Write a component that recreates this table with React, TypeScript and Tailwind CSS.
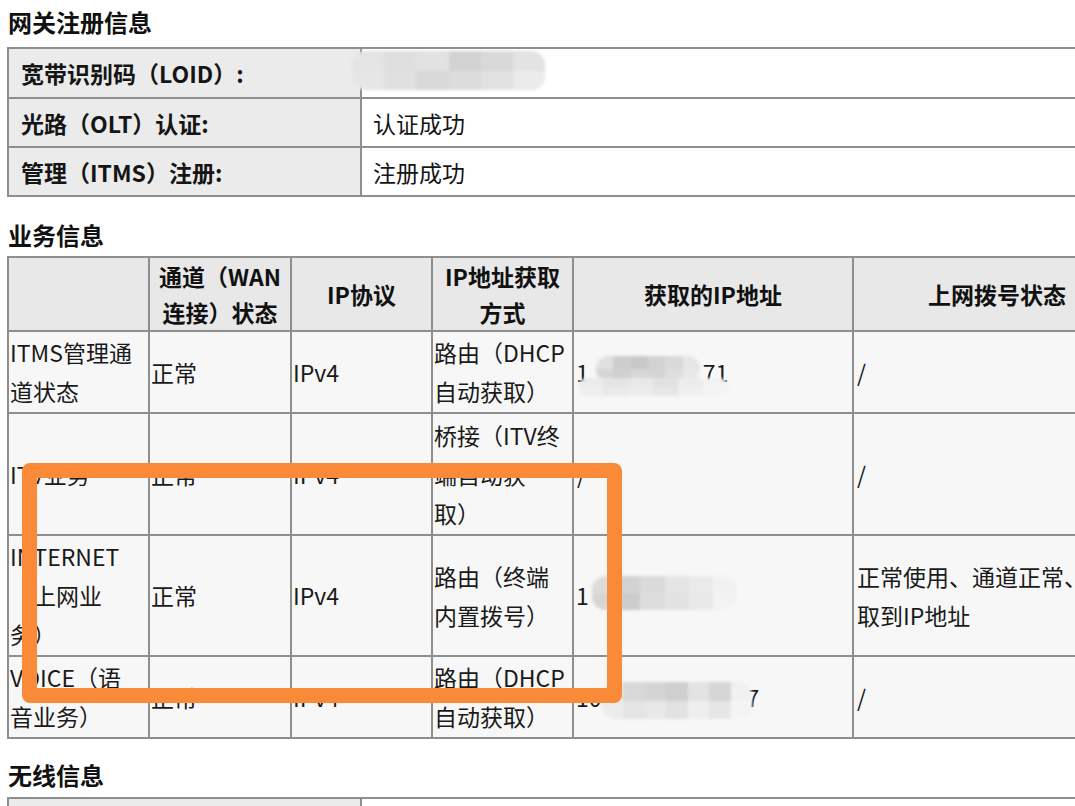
import React from 'react';

const FONT = "font-['Noto_Sans_CJK_SC','Noto_Sans',sans-serif]";

const TD_BORDER = 'border-2 border-[#8e8e8e]';

// pixelated mosaic used where the photo hides private values
const Blur = ({ className, top, bottom }: { className: string; top: string[]; bottom: string[] }) => (
  <div className={`absolute pointer-events-none rounded-[14px] overflow-hidden bg-[#e9e9e9] blur-[1.5px] flex flex-col ${className}`}>
    <div className="flex flex-1">
      {top.map((c, i) => (
        <div key={i} className={`flex-1 ${c}`} />
      ))}
    </div>
    <div className="flex flex-1">
      {bottom.map((c, i) => (
        <div key={i} className={`flex-1 ${c}`} />
      ))}
    </div>
  </div>
);

const SectionTitle = ({ text, className }: { text: string; className: string }) => (
  <div className={`text-[24px] leading-[30px] font-bold text-[#111] ${className}`}>{text}</div>
);

const InfoRow = ({ label, value, h }: { label: string; value?: React.ReactNode; h: string }) => (
  <tr className={h}>
    <td className={`${TD_BORDER} bg-[#ebebeb] px-[12px] font-bold text-[23px] leading-[30px] whitespace-nowrap`}>{label}</td>
    <td className={`${TD_BORDER} bg-white px-[11px] text-[23px] leading-[30px] whitespace-nowrap relative`}>{value}</td>
  </tr>
);

const Lines = ({ lines }: { lines: string[] }) => (
  <>
    {lines.map((l, i) => (
      <div key={i}>{l}</div>
    ))}
  </>
);

const body = `${TD_BORDER} bg-[#f7f7f7] px-[1px] text-[23px] leading-[39px] text-[#1a1a1a] align-middle whitespace-nowrap overflow-hidden`;
const head = `${TD_BORDER} bg-[#e8e8e8] text-center font-bold text-[23px] leading-[36px] text-[#111] align-middle whitespace-nowrap`;

export default function App() {
  return (
    <div className={`relative w-[1075px] h-[806px] overflow-hidden bg-white text-[#151515] ${FONT}`}>
      <div className="pl-[8px]">
        <SectionTitle text="网关注册信息" className="pt-[7px] mb-[10px]" />
        <table className="table-fixed border-collapse w-[1133px] -ml-[1px]">
          <colgroup>
            <col className="w-[353px]" />
            <col />
          </colgroup>
          <tbody>
            <InfoRow
              h="h-[50px]"
              label="宽带识别码（LOID）:"
              value={
                <Blur
                  className="-left-[10px] top-[2px] w-[193px] h-[39px]"
                  top={['bg-[#e4e4e4]', 'bg-[#dedede]', 'bg-[#e2e2e2]', 'bg-[#d2d2d2]', 'bg-[#d9d9d9]', 'bg-[#e3e3e3]']}
                  bottom={['bg-[#e6e6e6]', 'bg-[#e0e0e0]', 'bg-[#d8d8d8]', 'bg-[#dcdcdc]', 'bg-[#e1e1e1]', 'bg-[#ebebeb]']}
                />
              }
            />
            <InfoRow h="h-[49px]" label="光路（OLT）认证:" value="认证成功" />
            <InfoRow h="h-[49px]" label="管理（ITMS）注册:" value="注册成功" />
          </tbody>
        </table>

        <SectionTitle text="业务信息" className="mt-[23px] mb-[6px]" />
        <table className="table-fixed border-collapse w-[1133px] -ml-[1px]">
          <colgroup>
            <col className="w-[141px]" />
            <col className="w-[142px]" />
            <col className="w-[141px]" />
            <col className="w-[141px]" />
            <col className="w-[280px]" />
            <col className="w-[288px]" />
          </colgroup>
          <thead>
            <tr className="h-[73px]">
              <th className={head}></th>
              <th className={head}>
                <Lines lines={['通道（WAN', '连接）状态']} />
              </th>
              <th className={head}>IP协议</th>
              <th className={head}>
                <Lines lines={['IP地址获取', '方式']} />
              </th>
              <th className={head}>获取的IP地址</th>
              <th className={head}>上网拨号状态</th>
            </tr>
          </thead>
          <tbody>
            <tr className="h-[82px]">
              <td className={body}>
                <Lines lines={['ITMS管理通', '道状态']} />
              </td>
              <td className={body}>正常</td>
              <td className={body}>IPv4</td>
              <td className={body}>
                <Lines lines={['路由（DHCP', '自动获取）']} />
              </td>
              <td className={`${body} relative`}>
                <div className="flex pl-[1px]">
                  <span>1</span>
                  <span className="w-[114px]" />
                  <span>71</span>
                </div>
                <Blur
                  className="left-[22px] top-[24px] w-[104px] h-[26px]"
                  top={['bg-[#e0e0e0]', 'bg-[#cdcdcd]', 'bg-[#c8c8c8]', 'bg-[#d2d2d2]', 'bg-[#d9d9d9]', 'bg-[#e6e6e6]']}
                  bottom={['bg-[#d6d6d6]', 'bg-[#d0d0d0]', 'bg-[#d8d8d8]', 'bg-[#d4d4d4]', 'bg-[#dedede]', 'bg-[#e8e8e8]']}
                />
                <Blur
                  className="left-[4px] top-[46px] w-[150px] h-[18px]"
                  top={['bg-[#ebebeb]', 'bg-[#e4e4e4]', 'bg-[#e8e8e8]', 'bg-[#e1e1e1]', 'bg-[#ececec]', 'bg-[#f3f3f3]']}
                  bottom={['bg-[#eeeeee]', 'bg-[#e9e9e9]', 'bg-[#ececec]', 'bg-[#e6e6e6]', 'bg-[#efefef]', 'bg-[#f4f4f4]']}
                />
              </td>
              <td className={`${body} pl-[3px]`}>/</td>
            </tr>
            <tr className="h-[122px]">
              <td className={body}>ITV业务</td>
              <td className={body}>正常</td>
              <td className={body}>IPv4</td>
              <td className={body}>
                <Lines lines={['桥接（ITV终', '端自动获', '取）']} />
              </td>
              <td className={`${body} pl-[3px]`}>/</td>
              <td className={`${body} pl-[3px]`}>/</td>
            </tr>
            <tr className="h-[121px]">
              <td className={body}>
                <Lines lines={['INTERNET', '（上网业', '务）']} />
              </td>
              <td className={body}>正常</td>
              <td className={body}>IPv4</td>
              <td className={body}>
                <Lines lines={['路由（终端', '内置拨号）']} />
              </td>
              <td className={`${body} relative`}>
                <div className="flex pl-[1px]">
                  <span>1</span>
                </div>
                <Blur
                  className="left-[18px] top-[40px] w-[145px] h-[34px]"
                  top={['bg-[#dcdcdc]', 'bg-[#d2d2d2]', 'bg-[#dadada]', 'bg-[#e4e4e4]', 'bg-[#eaeaea]', 'bg-[#f1f1f1]']}
                  bottom={['bg-[#d6d6d6]', 'bg-[#cccccc]', 'bg-[#dddddd]', 'bg-[#e2e2e2]', 'bg-[#e9e9e9]', 'bg-[#f3f3f3]']}
                />
              </td>
              <td className={`${body} pl-[3px]`}>
                <Lines lines={['正常使用、通道正常、获', '取到IP地址']} />
              </td>
            </tr>
            <tr className="h-[82px]">
              <td className={body}>
                <Lines lines={['VOICE（语', '音业务）']} />
              </td>
              <td className={body}>正常</td>
              <td className={body}>IPv4</td>
              <td className={body}>
                <Lines lines={['路由（DHCP', '自动获取）']} />
              </td>
              <td className={`${body} relative`}>
                <div className="flex pl-[1px]">
                  <span>10</span>
                  <span className="w-[145px]" />
                  <span>7</span>
                </div>
                <Blur
                  className="left-[28px] top-[25px] w-[150px] h-[37px]"
                  top={['bg-[#e6e6e6]', 'bg-[#d8d8d8]', 'bg-[#d4d4d4]', 'bg-[#cfcfcf]', 'bg-[#e3e3e3]', 'bg-[#d6d6d6]', 'bg-[#f1f1f1]']}
                  bottom={['bg-[#ececec]', 'bg-[#e4e4e4]', 'bg-[#e8e8e8]', 'bg-[#e2e2e2]', 'bg-[#eeeeee]', 'bg-[#e6e6e6]', 'bg-[#f4f4f4]']}
                />
              </td>
              <td className={`${body} pl-[3px]`}>/</td>
            </tr>
          </tbody>
        </table>

        <SectionTitle text="无线信息" className="mt-[21px] mb-[7px]" />
        <table className="table-fixed border-collapse w-[1133px] -ml-[1px]">
          <colgroup>
            <col className="w-[353px]" />
            <col />
          </colgroup>
          <tbody>
            <InfoRow h="h-[50px]" label="" value="" />
          </tbody>
        </table>
      </div>

      {/* orange annotation frame drawn over the photo */}
      <div className="absolute left-[22px] top-[463px] w-[600px] h-[240px] border-[15px] border-[#fa8a38] rounded-[8px] pointer-events-none" />
    </div>
  );
}
